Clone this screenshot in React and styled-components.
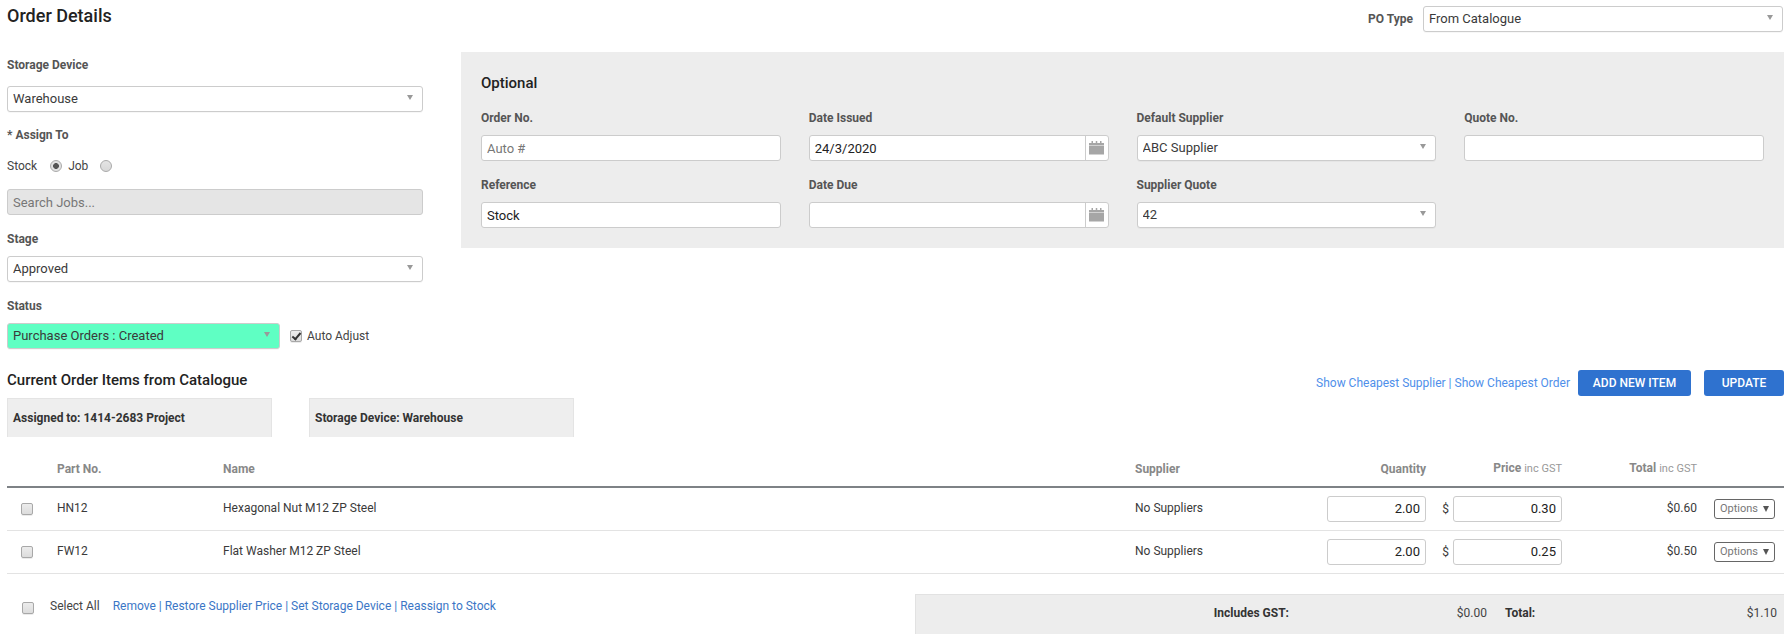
import React from "react";
import styled, { createGlobalStyle } from "styled-components";

const Global = createGlobalStyle`
  html, body { margin: 0; padding: 0; background: #fff; }
  body { font-family: Roboto, "Liberation Sans", sans-serif; font-size: 12px; color: #444; }
  * { box-sizing: border-box; }
`;

const Page = styled.div`
  width: 1790px;
  height: 634px;
  padding: 0 6px 0 7px;
  overflow: hidden;
`;

const TopBar = styled.header`
  display: flex;
  justify-content: space-between;
  height: 52px;
  padding-top: 6px;
`;

const Title = styled.h1`
  margin: 0;
  font-size: 18px;
  line-height: 20px;
  font-weight: 500;
  color: #222;
`;

const PoType = styled.div`
  display: flex;
  align-items: center;
  align-self: flex-start;
  gap: 10px;
  margin-right: 1px;
  font-weight: 700;
  color: #555;
`;

const Body = styled.div`
  display: flex;
  align-items: flex-start;
`;

const LeftColumn = styled.div`
  width: 416px;
  flex: none;
`;

const Label = styled.div`
  font-size: 12px;
  line-height: 16px;
  font-weight: 700;
  color: #555;
  margin: ${(p) => p.$top ?? 15}px 0 ${(p) => p.$after ?? 15}px;
`;

const SelectWrap = styled.div`
  position: relative;
  width: ${(p) => p.$width || "100%"};
  flex: none;
  &::after {
    content: "";
    position: absolute;
    right: 10px;
    top: 9px;
    border-left: 3.5px solid transparent;
    border-right: 3.5px solid transparent;
    border-top: 5px solid #999;
    pointer-events: none;
  }
`;

const SelectBox = styled.select`
  display: block;
  appearance: none;
  width: 100%;
  height: 26px;
  padding: 0 20px 2px 5px;
  border: 1px solid #ccc;
  border-radius: 3px;
  box-shadow: 0 1px 0 rgba(0, 0, 0, 0.03);
  background: ${(p) => p.$bg || "#fff"};
  font: 400 13px Roboto, sans-serif;
  color: #3a3a3a;
  outline: none;
`;

const Select = ({ value, width, bg }) => (
  <SelectWrap $width={width}>
    <SelectBox $bg={bg} value={value} onChange={() => {}}>
      <option>{value}</option>
    </SelectBox>
  </SelectWrap>
);

const TextInput = styled.input`
  display: block;
  width: ${(p) => p.$width || "100%"};
  height: 26px;
  padding: 0 5px;
  border: 1px solid #ccc;
  border-radius: 3px;
  background: ${(p) => (p.disabled ? "#e5e5e5" : "#fff")};
  font: 400 13px Roboto, sans-serif;
  color: #222;
  text-align: ${(p) => p.$align || "left"};
  outline: none;
  &::placeholder { color: #777; opacity: 1; }
`;

const SearchInput = styled(TextInput)`
  margin-top: 15px;
`;

const RadioRow = styled.div`
  display: flex;
  align-items: center;
  height: 16px;
  font-size: 12px;
  color: #444;
`;

const Radio = styled.input.attrs({ type: "radio" })`
  appearance: none;
  width: 12px;
  height: 12px;
  margin: 0 6px 0 ${(p) => p.$left}px;
  border: 1px solid #aaa;
  border-radius: 50%;
  background: linear-gradient(#e4e4e4, #d8d8d8);
  &:checked {
    background: radial-gradient(circle, #555 0 2.6px, #e2e2e2 3.2px);
  }
`;

const Check = styled.input.attrs({ type: "checkbox" })`
  appearance: none;
  display: block;
  flex: none;
  width: 12px;
  height: 12px;
  margin: 0;
  border: 1px solid #a8a8a8;
  border-radius: 2px;
  background: linear-gradient(#ececec, #dcdcdc);
  box-shadow: 0 1px 0 rgba(0, 0, 0, 0.08);
  position: relative;
  &:checked::after {
    content: "";
    position: absolute;
    left: 3px;
    top: 0;
    width: 3px;
    height: 7px;
    border: solid #333;
    border-width: 0 2px 2px 0;
    transform: rotate(40deg);
  }
`;

const StatusRow = styled.div`
  display: flex;
  align-items: center;
  font-size: 12px;
`;

const AutoAdjust = styled.label`
  display: flex;
  align-items: center;
  gap: 5px;
  margin-left: 10px;
  color: #444;
`;

const Panel = styled.section`
  flex: 1;
  height: 196px;
  margin-left: 38px;
  padding: 21px 20px 20px;
  background: #ededed;
`;

const PanelTitle = styled.h2`
  margin: 0 0 17px;
  font-size: 15px;
  line-height: 20px;
  font-weight: 500;
  color: #222;
`;

const PanelGrid = styled.div`
  display: grid;
  grid-template-columns: repeat(4, 1fr);
  column-gap: 28px;
  row-gap: 16px;
`;

const FieldLabel = styled.div`
  font-size: 12px;
  line-height: 16px;
  font-weight: 700;
  color: #555;
  margin-bottom: 9px;
`;

const DateGroup = styled.div`
  display: flex;
  height: 26px;
  border: 1px solid #ccc;
  border-radius: 3px;
  background: #fff;
`;

const DateInput = styled.input`
  flex: 1;
  min-width: 0;
  padding: 0 5px;
  border: 0;
  background: transparent;
  font: 400 13px Roboto, sans-serif;
  color: #222;
  outline: none;
`;

const DateAddon = styled.span`
  flex: none;
  width: 23px;
  display: flex;
  align-items: center;
  justify-content: center;
  border-left: 1px solid #ccc;
`;

const CalendarIcon = () => (
  <svg width="15" height="14" viewBox="0 0 15 14" fill="#a6a6a6">
    <rect x="2.5" y="0" width="1.5" height="2.5" />
    <rect x="6.75" y="0" width="1.5" height="2.5" />
    <rect x="11" y="0" width="1.5" height="2.5" />
    <rect x="0" y="2" width="15" height="2.5" />
    <rect x="0" y="5" width="15" height="8.5" />
  </svg>
);

const DateField = ({ label, value }) => (
  <div>
    <FieldLabel>{label}</FieldLabel>
    <DateGroup>
      <DateInput readOnly value={value} />
      <DateAddon>
        <CalendarIcon />
      </DateAddon>
    </DateGroup>
  </div>
);

const OrderBar = styled.div`
  display: flex;
  justify-content: space-between;
  align-items: flex-start;
  margin-top: 21px;
  height: 67px;
`;

const SectionTitle = styled.h2`
  margin: 0 0 8px;
  font-size: 15px;
  line-height: 20px;
  font-weight: 500;
  color: #222;
`;

const Cards = styled.div`
  display: flex;
  gap: 37px;
`;

const Card = styled.div`
  width: 265px;
  height: 39px;
  display: flex;
  align-items: center;
  padding-left: 5px;
  background: #eee;
  border: 1px solid #e4e4e4;
  border-bottom: 0;
  font-size: 12px;
  font-weight: 700;
  color: #333;
`;

const Actions = styled.div`
  display: flex;
  align-items: center;
`;

const TopLinks = styled.div`
  font-size: 12px;
  color: #4f8fea;
  margin-right: 8px;
`;

const LinkText = styled.a`
  color: inherit;
  text-decoration: none;
`;

const Button = styled.button`
  width: ${(p) => p.$width}px;
  height: 26px;
  margin-left: ${(p) => p.$left || 0}px;
  padding: 0;
  border: 0;
  border-radius: 3px;
  background: #2f72cf;
  color: #fff;
  font: 500 12px Roboto, sans-serif;
`;

const columns = "50px 166px 912px 191px 100px 136px 135px 1fr";

const HeadRow = styled.div`
  display: grid;
  grid-template-columns: ${columns};
  align-items: end;
  height: 51px;
  padding-bottom: 9px;
  border-bottom: 2px solid #7e8286;
  font-size: 12px;
  line-height: 16px;
  font-weight: 700;
  color: #888;
`;

const HeadCell = styled.div`
  text-align: ${(p) => p.$align || "left"};
`;

const Sub = styled.span`
  font-size: 11px;
  font-weight: 400;
  color: #999;
`;

const Row = styled.div`
  display: grid;
  grid-template-columns: ${columns};
  align-items: center;
  height: 43px;
  padding-bottom: 1px;
  border-bottom: 1px solid #e3e3e3;
  font-size: 12px;
  color: #3a3a3a;
`;

const CheckCell = styled.div`
  padding-left: 14px;
`;

const TextCell = styled.div`
  padding-bottom: 2px;
  text-align: ${(p) => p.$align || "left"};
`;

const QtyCell = styled.div`
  display: flex;
  justify-content: flex-end;
  align-items: center;
  gap: 4px;
`;

const OptionsCell = styled.div`
  padding-left: 17px;
`;

const OptionsButton = styled.button`
  display: flex;
  align-items: center;
  justify-content: space-between;
  width: 61px;
  height: 20px;
  padding: 0 5px;
  border: 1px solid #666;
  border-radius: 3px;
  background: #fff;
  color: #777;
  font: 400 11px Roboto, sans-serif;
  &::after {
    content: "";
    border-left: 3.5px solid transparent;
    border-right: 3.5px solid transparent;
    border-top: 6px solid #555;
  }
`;

const BottomBar = styled.div`
  display: flex;
  justify-content: space-between;
  align-items: flex-start;
  margin-top: 20px;
`;

const SelectAll = styled.div`
  display: flex;
  align-items: flex-start;
  padding: 8px 0 0 15px;
  font-size: 12px;
  line-height: 12px;
`;

const SelectAllLabel = styled.span`
  margin: -2px 13px 0 16px;
  color: #444;
`;

const BottomLinks = styled.div`
  margin-top: -2px;
  color: #3b76c6;
`;

const Totals = styled.div`
  display: grid;
  grid-template-columns: 373px 198px 1fr auto;
  align-items: center;
  width: 869px;
  height: 40px;
  padding: 0 7px 3px 0;
  background: #ededed;
  border: 1px solid #e2e2e2;
  border-width: 1px 0 0 1px;
  font-size: 12px;
  color: #444;
`;

const TotalLabel = styled.div`
  font-weight: 700;
  color: #333;
  text-align: ${(p) => p.$align || "left"};
  padding-left: ${(p) => p.$left || 0}px;
`;

const Amount = styled.div`
  text-align: right;
`;

const items = [
  { part: "HN12", name: "Hexagonal Nut M12 ZP Steel", qty: "2.00", price: "0.30", total: "$0.60" },
  { part: "FW12", name: "Flat Washer M12 ZP Steel", qty: "2.00", price: "0.25", total: "$0.50" },
];

export default function App() {
  return (
    <Page>
      <Global />
      <TopBar>
        <Title>Order Details</Title>
        <PoType>
          PO Type
          <Select value="From Catalogue" width="360px" />
        </PoType>
      </TopBar>

      <Body>
        <LeftColumn>
          <Label $top={5} $after={13}>Storage Device</Label>
          <Select value="Warehouse" />
          <Label>* Assign To</Label>
          <RadioRow>
            Stock
            <Radio $left={13} defaultChecked name="assign" />
            Job
            <Radio $left={12} name="assign" />
          </RadioRow>
          <SearchInput disabled placeholder="Search Jobs..." />
          <Label $top={16} $after={9}>Stage</Label>
          <Select value="Approved" />
          <Label $top={16} $after={9}>Status</Label>
          <StatusRow>
            <Select value="Purchase Orders : Created" width="273px" bg="#5fffc3" />
            <AutoAdjust>
              <Check defaultChecked />
              Auto Adjust
            </AutoAdjust>
          </StatusRow>
        </LeftColumn>

        <Panel>
          <PanelTitle>Optional</PanelTitle>
          <PanelGrid>
            <div>
              <FieldLabel>Order No.</FieldLabel>
              <TextInput placeholder="Auto #" />
            </div>
            <DateField label="Date Issued" value="24/3/2020" />
            <div>
              <FieldLabel>Default Supplier</FieldLabel>
              <Select value="ABC Supplier" />
            </div>
            <div>
              <FieldLabel>Quote No.</FieldLabel>
              <TextInput />
            </div>
            <div>
              <FieldLabel>Reference</FieldLabel>
              <TextInput readOnly value="Stock" />
            </div>
            <DateField label="Date Due" value="" />
            <div>
              <FieldLabel>Supplier Quote</FieldLabel>
              <Select value="42" />
            </div>
          </PanelGrid>
        </Panel>
      </Body>

      <OrderBar>
        <div>
          <SectionTitle>Current Order Items from Catalogue</SectionTitle>
          <Cards>
            <Card>Assigned to: 1414-2683 Project</Card>
            <Card>Storage Device: Warehouse</Card>
          </Cards>
        </div>
        <Actions>
          <TopLinks>
            <LinkText>Show Cheapest Supplier</LinkText> | <LinkText>Show Cheapest Order</LinkText>
          </TopLinks>
          <Button $width={113}>ADD NEW ITEM</Button>
          <Button $width={80} $left={13}>UPDATE</Button>
        </Actions>
      </OrderBar>

      <HeadRow>
        <span />
        <HeadCell>Part No.</HeadCell>
        <HeadCell>Name</HeadCell>
        <HeadCell>Supplier</HeadCell>
        <HeadCell $align="right">Quantity</HeadCell>
        <HeadCell $align="right">Price <Sub>inc GST</Sub></HeadCell>
        <HeadCell $align="right">Total <Sub>inc GST</Sub></HeadCell>
        <span />
      </HeadRow>

      {items.map((it) => (
        <Row key={it.part}>
          <CheckCell><Check /></CheckCell>
          <TextCell>{it.part}</TextCell>
          <TextCell>{it.name}</TextCell>
          <TextCell>No Suppliers</TextCell>
          <QtyCell><TextInput readOnly value={it.qty} $width="99px" $align="right" /></QtyCell>
          <QtyCell>
            $
            <TextInput readOnly value={it.price} $width="109px" $align="right" />
          </QtyCell>
          <TextCell $align="right">{it.total}</TextCell>
          <OptionsCell><OptionsButton>Options</OptionsButton></OptionsCell>
        </Row>
      ))}

      <BottomBar>
        <SelectAll>
          <Check />
          <SelectAllLabel>Select All</SelectAllLabel>
          <BottomLinks>
            <LinkText>Remove</LinkText> | <LinkText>Restore Supplier Price</LinkText> |{" "}
            <LinkText>Set Storage Device</LinkText> | <LinkText>Reassign to Stock</LinkText>
          </BottomLinks>
        </SelectAll>
        <Totals>
          <TotalLabel $align="right">Includes GST:</TotalLabel>
          <Amount>$0.00</Amount>
          <TotalLabel $left={18}>Total:</TotalLabel>
          <Amount>$1.10</Amount>
        </Totals>
      </BottomBar>
    </Page>
  );
}
